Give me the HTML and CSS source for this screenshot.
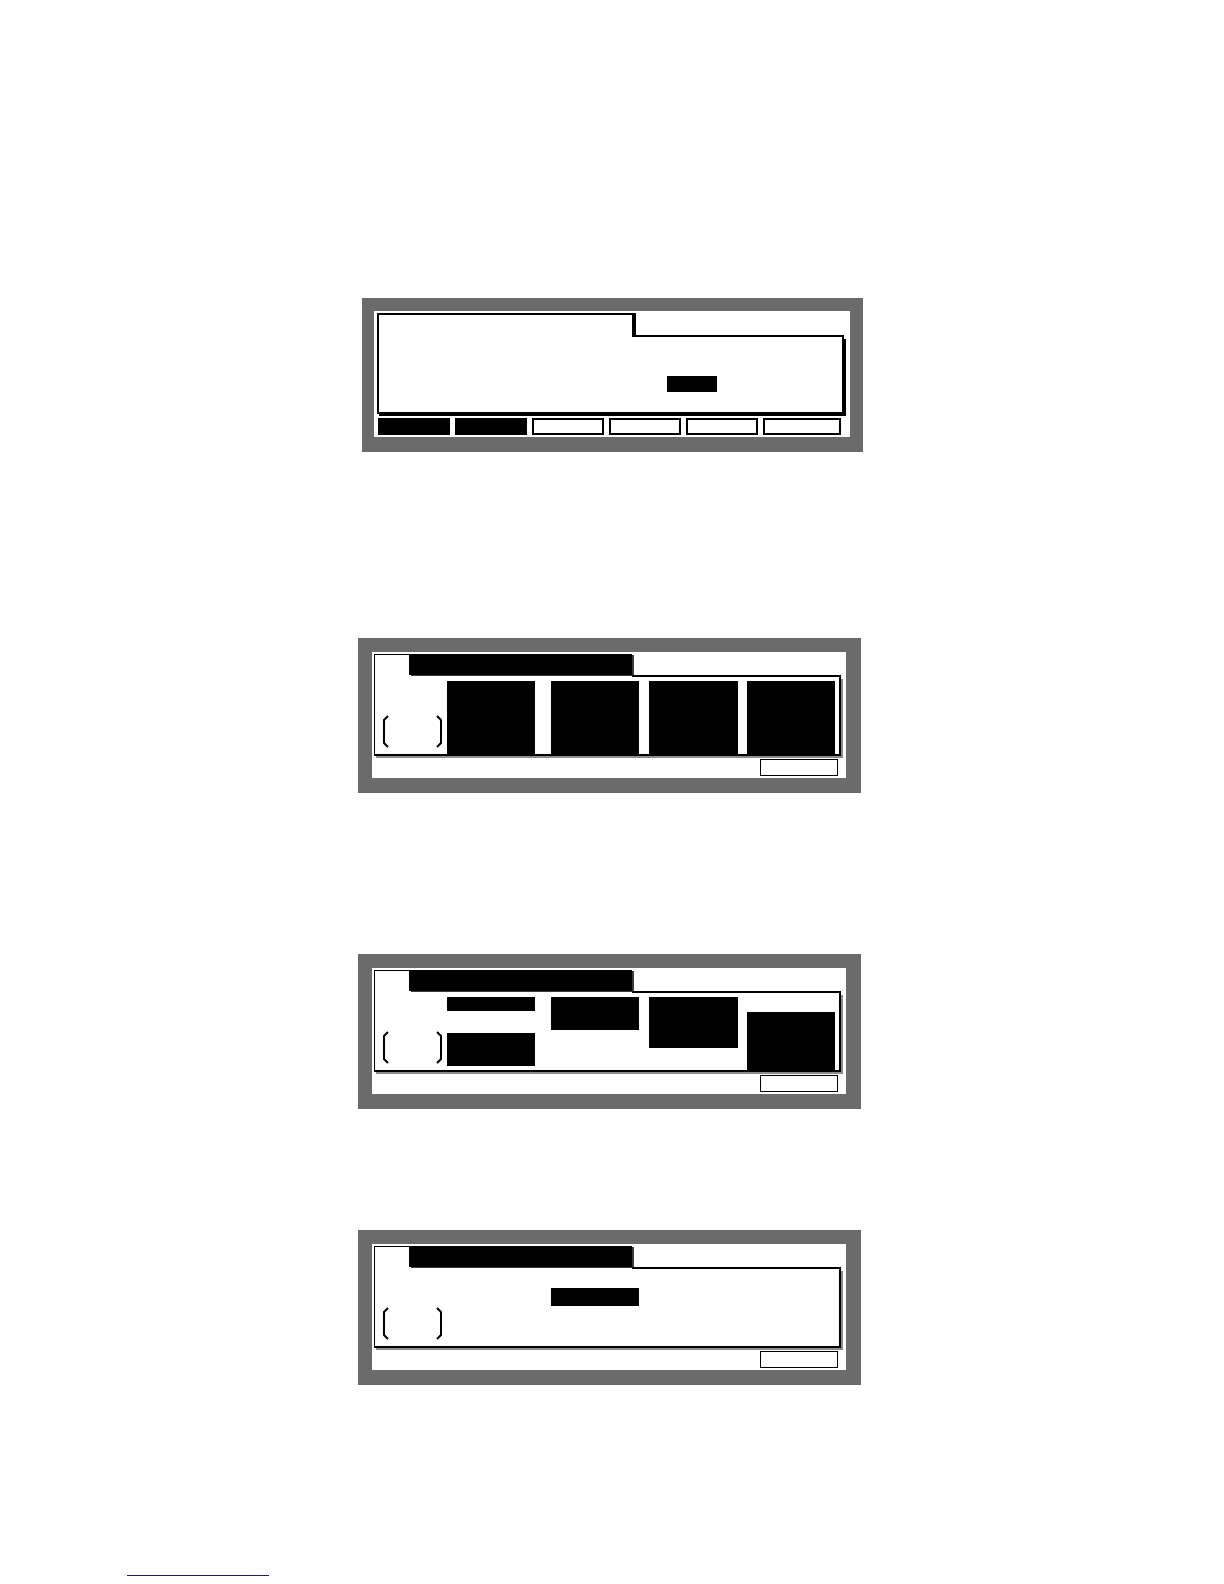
FILE: index.html
```html
<!DOCTYPE html>
<html lang="en">
<head>
<meta charset="utf-8">
<title>LCD screens</title>
<link rel="stylesheet" href="styles.css">
</head>
<body>
<div class="page">
  <section class="panel panel-a">
    <div class="frame">
      <div class="tabrow">
        <div class="tab-a"></div>
        <div class="tabline-a"></div>
      </div>
      <div class="body-a">
        <div class="value-box"></div>
      </div>
    </div>
    <div class="softkeys">
      <div class="key key-on"></div>
      <div class="key key-on"></div>
      <div class="key"></div>
      <div class="key"></div>
      <div class="key"></div>
      <div class="key"></div>
    </div>
  </section>

  <section class="panel panel-b p2">
    <div class="frame">
      <div class="tabrow">
        <div class="tab-b"><div class="title-bar"></div></div>
        <div class="tabline-b"></div>
      </div>
      <div class="body-b">
        <svg class="brackets" viewBox="0 0 61 33" width="61" height="33"><polyline points="6,1 2,5 2,28 6,32" fill="none" stroke="#000" stroke-width="2"/><polyline points="55,1 59,5 59,28 55,32" fill="none" stroke="#000" stroke-width="2"/></svg>
        <div class="col c1"><div class="bar mt4 fill"></div></div>
        <div class="col c2"><div class="bar mt4 fill"></div></div>
        <div class="col c3"><div class="bar mt4 fill"></div></div>
        <div class="col c4"><div class="bar mt4 fill"></div></div>
      </div>
    </div>
    <div class="soft-row"><div class="soft"></div></div>
  </section>

  <section class="panel panel-b p3">
    <div class="frame">
      <div class="tabrow">
        <div class="tab-b"><div class="title-bar"></div></div>
        <div class="tabline-b"></div>
      </div>
      <div class="body-b">
        <svg class="brackets" viewBox="0 0 61 33" width="61" height="33"><polyline points="6,1 2,5 2,28 6,32" fill="none" stroke="#000" stroke-width="2"/><polyline points="55,1 59,5 59,28 55,32" fill="none" stroke="#000" stroke-width="2"/></svg>
        <div class="col c1"><div class="bar mt4 h14"></div><div class="bar mt22 h33"></div></div>
        <div class="col c2"><div class="bar mt4 h33"></div></div>
        <div class="col c3"><div class="bar mt4 h51"></div></div>
        <div class="col c4"><div class="bar mt19 fill"></div></div>
      </div>
    </div>
    <div class="soft-row"><div class="soft"></div></div>
  </section>

  <section class="panel panel-b p4">
    <div class="frame">
      <div class="tabrow">
        <div class="tab-b"><div class="title-bar"></div></div>
        <div class="tabline-b"></div>
      </div>
      <div class="body-b">
        <svg class="brackets" viewBox="0 0 61 33" width="61" height="33"><polyline points="6,1 2,5 2,28 6,32" fill="none" stroke="#000" stroke-width="2"/><polyline points="55,1 59,5 59,28 55,32" fill="none" stroke="#000" stroke-width="2"/></svg>
        <div class="col c1"></div>
        <div class="col c2"><div class="bar mt19 h18"></div></div>
        <div class="col c3"></div>
        <div class="col c4"></div>
      </div>
    </div>
    <div class="soft-row"><div class="soft"></div></div>
  </section>

  <div class="footer-rule"></div>
</div>
</body>
</html>
```

FILE: styles.css
```css
html, body {
  margin: 0;
  background: #fff;
}

.page {
  padding-top: 298px;
  display: flex;
  flex-direction: column;
  align-items: flex-start;
  font-family: "Liberation Sans", Arial, sans-serif;
}

.panel {
  box-sizing: border-box;
  background: #fff;
  border-style: solid;
  border-color: #6b6b6b;
}

.panel-a {
  margin-left: 362px;
  width: 501px;
  height: 154px;
  border-width: 13px 13px 15px 12px;
  padding: 2px 0 0 3px;
}

.panel-b {
  margin-left: 358px;
  width: 503px;
  height: 155px;
  border-width: 14px 15px 15px 14px;
  padding: 2px 0 0 2px;
}

.p2 { margin-top: 186px; }
.p3 { margin-top: 161px; }
.p4 { margin-top: 121px; }

.frame {
  width: 467px;
}

.tabrow {
  display: flex;
}

/* Panel A frame */
.tab-a {
  box-sizing: border-box;
  width: 257px;
  height: 24px;
  border: 2px solid #000;
  border-bottom: 0;
  box-shadow: 2px 0 0 #000;
  background: #fff;
}

.tabline-a {
  flex: 1;
  border-bottom: 2px solid #000;
}

.body-a {
  box-sizing: border-box;
  height: 77px;
  border: 2px solid #000;
  border-top: 0;
  box-shadow: 2px 2px 0 #000;
  padding: 39px 0 0 288px;
}

.value-box {
  width: 50px;
  height: 16px;
  background: #000;
}

.softkeys {
  display: grid;
  grid-template-columns: repeat(5, 72px) 78px;
  column-gap: 5px;
  margin: 4px 0 0 1px;
}

.key {
  box-sizing: border-box;
  height: 17px;
  border: 2px solid #000;
  background: #fff;
}

.key-on {
  background: #000;
}

/* Panel B frames */
.tab-b {
  box-sizing: border-box;
  width: 258px;
  height: 23px;
  border-top: 1px solid #000;
  border-left: 1px solid #000;
  padding-left: 34px;
  display: flex;
  align-items: flex-start;
}

.title-bar {
  flex: 1;
  height: 21px;
  margin-top: -1px;
  background: #000;
  box-shadow: 2px 1px 0 #3a3a3a;
}

.tabline-b {
  flex: 1;
  border-bottom: 2px solid #000;
}

.body-b {
  box-sizing: border-box;
  height: 79px;
  border-left: 1px solid #000;
  border-right: 2px solid #000;
  border-bottom: 2px solid #000;
  box-shadow: 2px 2px 0 #8c8c8c;
  padding-left: 7px;
  display: flex;
  align-items: stretch;
}

.brackets {
  flex: none;
  display: block;
  width: 61px;
  height: 33px;
  margin: 38px 4px 0 0;
}

.col {
  flex: none;
  width: 88px;
  display: flex;
  flex-direction: column;
}

.c2 { margin-left: 16px; }
.c3 { margin-left: 10px; width: 89px; }
.c4 { margin-left: 9px; }

.bar {
  background: #000;
}

.fill { flex: 1; }
.mt4 { margin-top: 4px; }
.mt19 { margin-top: 19px; }
.mt22 { margin-top: 22px; }
.h14 { height: 14px; }
.h18 { height: 18px; }
.h33 { height: 33px; }
.h51 { height: 51px; }

.soft-row {
  width: 467px;
  display: flex;
  justify-content: flex-end;
  margin-top: 3px;
}

.soft {
  box-sizing: border-box;
  width: 78px;
  height: 17px;
  border: 1px solid #000;
  margin-right: 3px;
}

.footer-rule {
  margin: 190px 0 0 127px;
  width: 142px;
  height: 1px;
  background: #1c1c7c;
}
```
